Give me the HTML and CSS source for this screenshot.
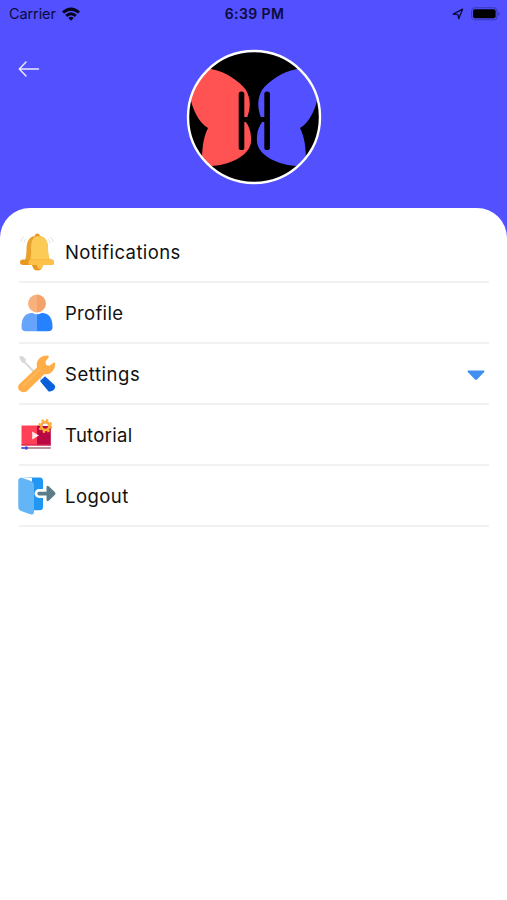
FILE: index.html
```
<!DOCTYPE html>
<html lang="en">
<head>
  <meta charset="UTF-8">
  <meta name="viewport" content="width=device-width, initial-scale=1.0">
  <title>Menu</title>
  <link rel="stylesheet" href="styles.css">
</head>
<body>
  <!-- Status bar -->
  <div class="status-bar">
    <div class="carrier">
      <span class="carrier-name">Carrier</span>
      <svg class="wifi" width="18" height="14" viewBox="0 0 18 14">
        <path d="M0 4.500Q9 -3.500 18 4.500L16 6.600Q9 0.800 2 6.600Z"/>
        <path d="M3.200 7.800Q9 2.500 14.800 7.800L12.800 9.900Q9 6.600 5.200 9.900Z"/>
        <path d="M6.300 10.900Q9 8.500 11.700 10.900L9 13.700Z"/>
      </svg>
    </div>
    <span class="time">6:39 PM</span>
    <div class="indicators">
      <svg width="12" height="12" viewBox="0 0 12 12">
        <path d="M1.2 6.1L10.6 1.2L6.7 10.7L6 6.6Z" fill="none" stroke="#0b0b3c" stroke-width="1.3" stroke-linejoin="round"/>
      </svg>
      <svg width="29" height="14" viewBox="0 0 29 14">
        <rect x="0.6" y="0.8" width="25.4" height="12" rx="3.4" fill="none" stroke="#3b39b8" stroke-width="1.1"/>
        <rect x="2" y="2.3" width="22.6" height="9" rx="2"/>
        <path d="M27.200 4.900Q28.600 5.400 28.600 6.800Q28.600 8.200 27.200 8.700Z" fill="#3533a3"/>
      </svg>
    </div>
  </div>

  <!-- Header with back button and avatar -->
  <header class="header">
    <svg class="back" width="22" height="16" viewBox="0 0 22 16">
      <path d="M8 1L1.3 8L8 15M1.5 8H20.5" fill="none" stroke="#e9e9ff" stroke-width="1.5" stroke-linecap="round" stroke-linejoin="round"/>
    </svg>
    <svg class="avatar" width="136" height="136" viewBox="6 5 136 136">
      <clipPath id="circle"><circle cx="74" cy="73" r="65.5"/></clipPath>
      <circle cx="74" cy="73" r="66"/>
      <g clip-path="url(#circle)">
        <path fill="#ff5252" d="M0 20L32 25.300C46 28 59 37 66 46C71 55 71 65 66 76V78.500C70 83 71.500 91 71 98C70 107 62 114 48 119Q41 121.500 32 122L22 119C22 105 23 94 28 84C18 78 12 64 10 52L0 48Z"/>
        <path fill="#5250ff" d="M148 20L116 25.300C102 28 89 37 82 46C77 55 77 65 82 76V78.500C78 83 76.500 91 77 98C78 107 86 114 100 119Q107 121.500 116 122L126 119C126 105 125 94 120 84C130 78 136 64 138 52L148 48Z"/>
      </g>
      <rect x="58.700" y="47.500" width="5.600" height="58.500" rx="2.600"/>
      <rect x="84.300" y="47.500" width="5.600" height="58.500" rx="2.600"/>
      <rect x="62" y="73" width="25" height="5"/>
      <circle cx="74" cy="73" r="66" fill="none" stroke="#fff" stroke-width="2.400"/>
    </svg>
  </header>

  <main class="panel">
    <ul class="menu">
      <li class="menu-item">
        <svg class="icon" width="38" height="38" viewBox="0 0 38 38">
          <path d="M3 9Q3 5.500 6 4M6 10Q6 7.500 8 6M35 9Q35 5.500 32 4M32 10Q32 7.500 30 6" fill="none" stroke="#e2e2e8" stroke-width="1"/>
          <circle cx="19.300" cy="3" r="2.500" fill="#e79a27"/>
          <path d="M14 32H25Q24 37.500 19.500 37.500Q15 37.500 14 32Z" fill="#e9981f"/>
          <path d="M19 32H25Q24 36 21 36Q19 35 19 32Z" fill="#ffc34e"/>
          <path d="M7 27.500Q8.500 23 8.500 16Q8.500 2.800 19.300 2.800Q30 2.800 30 16Q30 23 32 27.500Z" fill="#e9a12c"/>
          <path d="M12 27.500Q13.500 23 13 16Q13 3.300 20 3.300Q30 3.300 30 16Q30 23 32 27.500Z" fill="#fbcb55"/>
          <path d="M5 26.500H34Q36 27 36 29.500T34 32H5Q2 32 2 29.300T5 26.500Z" fill="#e9981f"/>
          <rect x="10.500" y="26.500" width="25.500" height="5.500" rx="2.600" fill="#fdc14a"/>
        </svg>
        <span class="label notifications">Notifications</span>
      </li>
      <li class="menu-item">
        <svg class="icon" width="38" height="38" viewBox="0 0 38 38">
          <path d="M19 19H13Q3.500 20 3.500 33Q3.500 37.300 8 37.300H19Z" fill="#66a4fb"/>
          <path d="M19 19H25Q34.500 20 34.500 33Q34.500 37.300 30 37.300H19Z" fill="#2681ff"/>
          <circle cx="19" cy="9.500" r="10.700" fill="#fff"/>
          <path d="M19 0.500A9 9 0 0 0 19 18.500Z" fill="#f8b17c"/>
          <path d="M19 0.500A9 9 0 0 1 19 18.500Z" fill="#f3a36a"/>
        </svg>
        <span class="label profile">Profile</span>
      </li>
      <li class="menu-item">
        <svg class="icon" width="38" height="38" viewBox="0 0 38 38">
          <path d="M1 2L4 0.800L8 4.300L7.500 6.800L24 23.500L22.500 25L6 8L3.800 7.500Z" fill="#d5d9dc"/>
          <path d="M22 26L27 21.200L36.500 30Q38 32 36 34.500T30.500 36.500Z" fill="#0b62dc"/>
          <path d="M24.500 28L29 32.500M27 25.500L32 30.500" stroke="#0953c5" stroke-width="1"/>
          <path d="M1 29.500L19 12.500C17.500 6 22 0 30 0.500L31 2L27.500 6.500L28 10L31.500 10.800L36 7.300L37.300 8.500C37 16 31.500 20.500 26.500 19L8.500 36.500Q4.500 38.500 1.500 35.500Q-1 32.500 1 29.500Z" fill="#ffad46"/>
          <path d="M5 31L22.500 14" stroke="#ffb85b" stroke-width="2"/>
        </svg>
        <span class="label settings">Settings</span>
        <svg class="caret" width="18" height="11" viewBox="0 0 18 11">
          <path d="M1 0.500H17Q18 1 17 2.200L10 9.600Q9 10.400 8 9.600L1 2.200Q0 1 1 0.500Z" fill="#418ff0"/>
        </svg>
      </li>
      <li class="menu-item">
        <svg class="icon" width="38" height="38" viewBox="0 0 38 38">
          <path d="M3.500 9.500H19V29.500H3.500Z" fill="#ff4057"/>
          <path d="M19 9.500H32.800V29.500H19Z" fill="#b90745"/>
          <path d="M3.500 28.300H32.800V29.500H3.500Z" fill="#d52a52"/>
          <path d="M14.200 15.500L21 19.500L14.200 23.500Z" fill="#ffe8ec"/>
          <path d="M3.500 32H32.800" stroke="#8d4857" stroke-width="1.200"/>
          <path d="M3.500 32H9" stroke="#394ee8" stroke-width="1.500"/>
          <circle cx="8.300" cy="32" r="1.700" fill="#394ee8"/>
          <circle cx="27.300" cy="10" r="6" fill="none" stroke="#ffad32" stroke-width="2" stroke-dasharray="2.400 2.310"/>
          <circle cx="27.300" cy="10" r="4" fill="#b90745" stroke="#ffae34" stroke-width="2.600"/>
          <path d="M24.500 10A2.800 2.800 0 0 1 30.100 10Z" fill="#fff"/>
        </svg>
        <span class="label tutorial">Tutorial</span>
      </li>
      <li class="menu-item">
        <svg class="icon" width="38" height="38" viewBox="0 0 38 38">
          <path d="M3.500 0.500H22Q25 0.500 25 4V30Q25 33.300 22 33.300H14V1Z" fill="#2196f3"/>
          <path d="M0.300 3.500Q0.300 0.500 4 0.800L13 4Q16 5 16 8V35Q16 38 13 37.500L3 34Q0.300 33 0.300 30Z" fill="#64b5f6"/>
          <path d="M21 16.500H30" stroke="#fff" stroke-width="8.800" stroke-linecap="round"/>
          <path d="M21 14.700H28.500V10Q29 7.800 31 9.500L37 15.300Q38 16.500 37 17.700L31 23.500Q29 25 28.500 23V18.500H21Q19.300 18.300 19.300 16.600T21 14.700Z" fill="#5c7c88"/>
        </svg>
        <span class="label logout">Logout</span>
      </li>
    </ul>
  </main>
</body>
</html>
```

FILE: styles.css
```
* {
  box-sizing: border-box;
}

body {
  margin: 0;
  min-height: 900px;
  display: flex;
  flex-direction: column;
  background-color: #5250ff;
  font-family: Inter, "Open Sans", sans-serif;
  color: #111;
}

.status-bar {
  display: grid;
  grid-template-columns: 1fr auto 1fr;
  align-items: center;
  height: 27px;
  padding: 0 7px 0 9px;
  font-size: 14.5px;
  color: #0b0b3c;
}

.carrier {
  display: flex;
  align-items: center;
  gap: 6px;
}

.carrier-name {
  letter-spacing: -0.1px;
}

.wifi {
  fill: #05051c;
}

.time {
  font-size: 14px;
  font-weight: 600;
  letter-spacing: 0.4px;
}

.indicators {
  display: flex;
  align-items: center;
  justify-content: flex-end;
  gap: 7px;
}

.header {
  display: grid;
  grid-template-columns: 1fr auto 1fr;
  align-items: start;
  height: 180.5px;
  padding: 22px 18px 0;
}

.back {
  margin-top: 12px;
}

.panel {
  flex: 1;
  padding: 14.5px 18px 0;
  background-color: #fff;
  border-radius: 30px 30px 0 0;
}

.menu {
  margin: 0;
  padding: 0;
  list-style: none;
}

.menu-item {
  display: flex;
  align-items: center;
  height: 61px;
  padding: 0 4px 2px 0;
  background: linear-gradient(#f1f1f1, #f1f1f1) right 0 bottom 0 / 470px 2px no-repeat;
}

.icon {
  flex: none;
  margin-right: 9px;
}

.label {
  font-size: 18.5px;
  line-height: 24px;
}

.notifications {
  letter-spacing: 0.42px;
}

.profile {
  letter-spacing: 0.3px;
}

.settings {
  letter-spacing: 0.55px;
}

.tutorial {
  letter-spacing: 0.3px;
}

.logout {
  letter-spacing: 0.45px;
}

.caret {
  margin: 3px 0 0 auto;
}
```
